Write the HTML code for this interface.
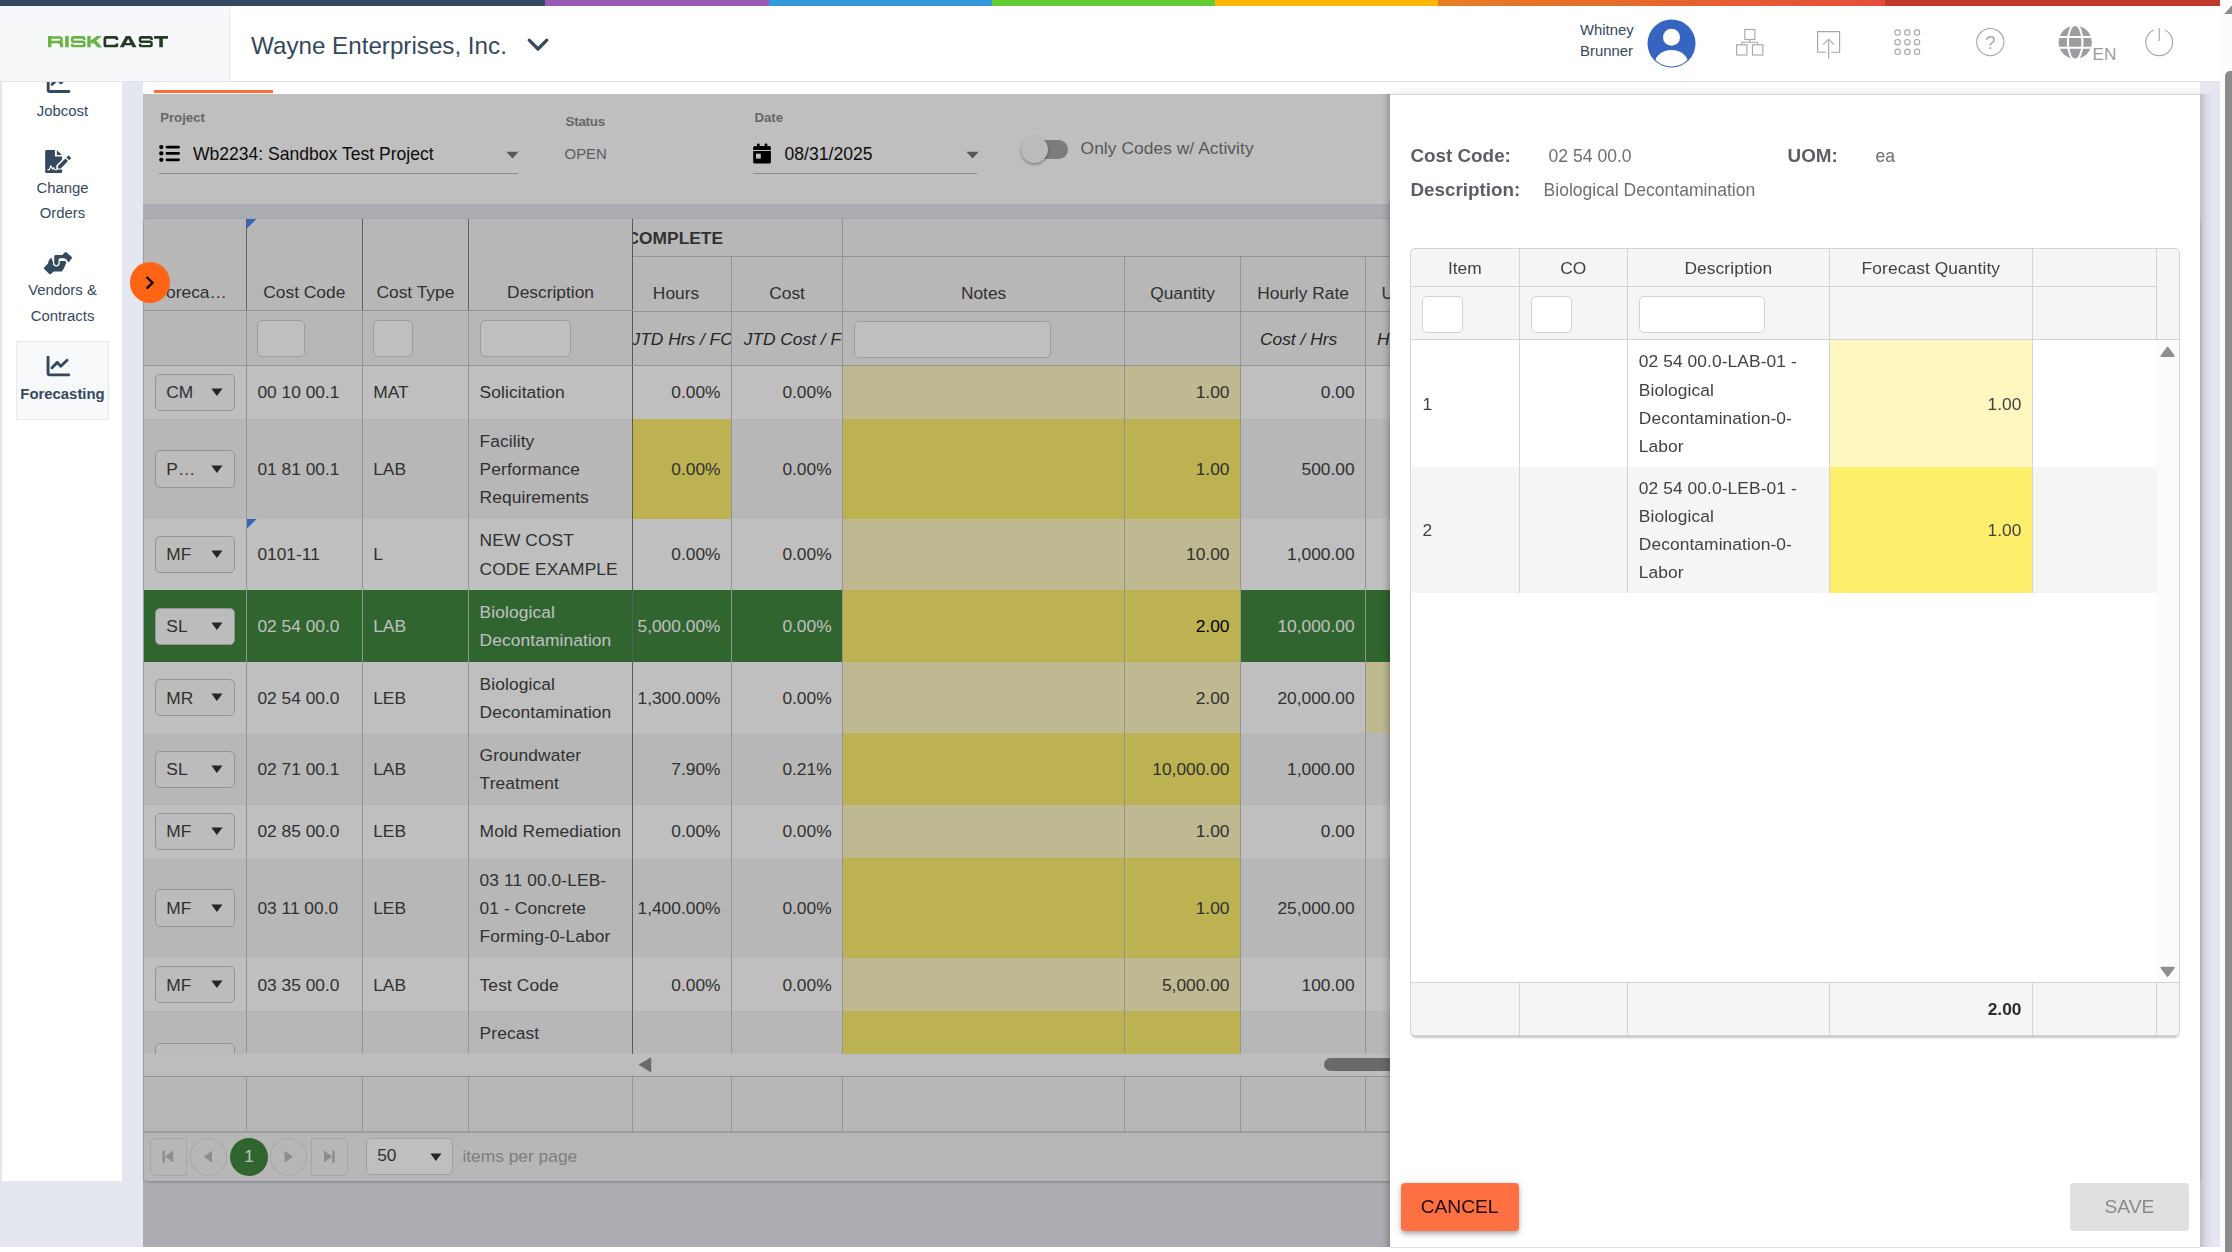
<!DOCTYPE html>
<html lang="en"><head><meta charset="utf-8"><title>Forecasting</title>
<style>
*{box-sizing:border-box;margin:0;padding:0}
html,body{width:2232px;height:1252px;overflow:hidden;background:#fff;font-family:"Liberation Sans",sans-serif;}
body{position:relative}
div{position:absolute}
svg{position:absolute;overflow:visible}
.cell{display:flex;align-items:center;font-size:17.36px;line-height:28.2px;color:#424242;padding:0 11px;overflow:hidden}
.cell.r{justify-content:flex-end;text-align:right}
.cell span{display:block}
.vb{background:#c9c9c9;width:1px}
.hb{background:#c9c9c9;height:1px}
.inp{background:#fff;border:1px solid #d2d2d2;border-radius:5px}
.dd{background:#fbfbfb;border:1px solid #c6c6c6;border-radius:5px}
</style></head>
<body>
<div style="left:0.00px;top:82.00px;width:2220.00px;height:1165.00px;background:#e4e7ef"></div>
<div style="left:0.00px;top:0.00px;width:545.00px;height:5.60px;background:#34495e"></div>
<div style="left:545.00px;top:0.00px;width:224.00px;height:5.60px;background:#9b59b6"></div>
<div style="left:769.00px;top:0.00px;width:223.00px;height:5.60px;background:#3498db"></div>
<div style="left:992.00px;top:0.00px;width:223.00px;height:5.60px;background:#62cb31"></div>
<div style="left:1215.00px;top:0.00px;width:223.00px;height:5.60px;background:#ffb606"></div>
<div style="left:1438.00px;top:0.00px;width:447.00px;height:5.60px;background:linear-gradient(90deg,#e67e22,#e74c3c)"></div>
<div style="left:1885.00px;top:0.00px;width:335.00px;height:5.60px;background:#c0392b"></div>
<div style="left:0.00px;top:5.60px;width:2220.00px;height:76.10px;background:#fff;border-bottom:1px solid #e1e3e6"></div>
<div style="left:0.00px;top:5.60px;width:230.00px;height:75.40px;background:#f7f8fa;border-right:1px solid #e4e6ec"></div>
<svg style="left:47.6px;top:36.2px" width="121" height="11.6" viewBox="0 0 121 11.6"><defs><clipPath id="lg"><rect x="-1" y="0" width="123" height="11.6"/></clipPath></defs><g clip-path="url(#lg)"><g stroke="#69b342" fill="none"><path d="M1.7 0V11.6" stroke-width="3.4"/><path d="M1.7 1.4H11.7Q13.6 1.4 13.6 3.1V4.5Q13.6 6.1 11.7 6.1H1.7" stroke-width="2.5"/><path d="M10.2 6.1Q13.6 6.2 13.6 8.8V11.6" stroke-width="3.3"/><path d="M18.9 0V11.6" stroke-width="3.6"/><path d="M36.25 3.9V2.9Q36.25 1.4 34.75 1.4H25.650000000000002Q24.150000000000002 1.4 24.150000000000002 2.9V4.3Q24.150000000000002 5.8 25.650000000000002 5.8H34.75Q36.25 5.8 36.25 7.3V8.7Q36.25 10.2 34.75 10.2H25.650000000000002Q24.150000000000002 10.2 24.150000000000002 8.7V7.7" fill="none" stroke-width="2.55"/><path d="M41 0V11.6" stroke-width="3.4"/><path d="M52.4 -0.8L43 6.6" stroke-width="3.3"/><path d="M45.9 4.6L52.6 12.2" stroke-width="3.5"/></g><g stroke="#263b23" fill="none"><path d="M68.9 4.1V2.9Q68.9 1.4 67.3 1.4H58.5Q56.85 1.4 56.85 2.9V8.7Q56.85 10.2 58.5 10.2H67.3Q68.9 10.2 68.9 8.7V7.4" stroke-width="2.7"/><path d="M103.55 3.9V2.9Q103.55 1.4 102.05 1.4H93.55Q92.05 1.4 92.05 2.9V4.3Q92.05 5.8 93.55 5.8H102.05Q103.55 5.8 103.55 7.3V8.7Q103.55 10.2 102.05 10.2H93.55Q92.05 10.2 92.05 8.7V7.7" fill="none" stroke-width="2.55"/><path d="M113.1 0V11.6" stroke-width="3.6"/><path d="M106.1 1.35H120.1" stroke-width="2.7"/></g><path d="M71.6 11.6L77.9 0H82.3L88.7 11.6H84.7L83.5 9.3H76.8L75.6 11.6ZM78 6.9H82.3L80.15 2.8Z" fill="#263b23" fill-rule="evenodd"/></g></svg>
<div style="top:31px;font-size:24.2px;line-height:29px;color:#34495e;font-weight:normal;white-space:nowrap;left:251.00px;">Wayne Enterprises, Inc.</div>
<svg style="left:526px;top:36px" width="24" height="18" viewBox="0 0 24 18"><path d="M3.2 4.2 L12 13 L20.8 4.2" fill="none" stroke="#34495e" stroke-width="3.2" stroke-linecap="round" stroke-linejoin="round"/></svg>
<div style="top:21px;font-size:14.88px;line-height:18px;color:#34495e;font-weight:normal;white-space:nowrap;left:1580.00px;">Whitney</div>
<div style="top:42px;font-size:14.88px;line-height:18px;color:#34495e;font-weight:normal;white-space:nowrap;left:1580.00px;">Brunner</div>
<svg style="left:1647px;top:19.2px" width="49" height="49" viewBox="0 0 49 49"><defs><clipPath id="av"><circle cx="24.5" cy="24.5" r="23"/></clipPath></defs><circle cx="24.5" cy="24.5" r="24" fill="#3565c0"/><circle cx="24.5" cy="18.2" r="8.5" fill="#fff"/><ellipse cx="24.5" cy="44.6" rx="16.8" ry="13.6" fill="#fff" clip-path="url(#av)"/></svg>
<svg style="left:1735px;top:28px" width="30" height="29" viewBox="0 0 30 29" fill="none" stroke="#a9a8a9" stroke-width="1.15"><rect x="9.8" y="1.5" width="10" height="10"/><rect x="1.6" y="16.8" width="10.3" height="10.2"/><rect x="17.5" y="16.8" width="10.3" height="10.2"/><path d="M14.8 11.5V14.2M6.8 16.8V14.2H22.6V16.8"/></svg>
<svg style="left:1816px;top:30px" width="26" height="30" viewBox="0 0 26 30" fill="none" stroke="#a9a8a9" stroke-width="1.15"><path d="M10 22.2H1.6V1.6H23.6V22.2H15.2"/><path d="M12.6 28.4V9.2M7.2 14.6L12.6 9.2L18 14.6"/></svg>
<svg style="left:1894.3px;top:28.8px" width="28" height="28" viewBox="0 0 28 28" fill="none" stroke="#a9a8a9" stroke-width="1.1"><circle cx="3.6" cy="3.6" r="2.7"/><circle cx="3.6" cy="13.2" r="2.7"/><circle cx="3.6" cy="22.8" r="2.7"/><circle cx="13.3" cy="3.6" r="2.7"/><circle cx="13.3" cy="13.2" r="2.7"/><circle cx="13.3" cy="22.8" r="2.7"/><circle cx="23.0" cy="3.6" r="2.7"/><circle cx="23.0" cy="13.2" r="2.7"/><circle cx="23.0" cy="22.8" r="2.7"/></svg>
<svg style="left:1975px;top:27px" width="31" height="31" viewBox="0 0 31 31" fill="none" stroke="#a9a8a9" stroke-width="1.15"><circle cx="15.3" cy="15.1" r="13.6"/><text x="15.4" y="21.6" font-family="Liberation Sans" font-size="18.5" text-anchor="middle" fill="#a9a8a9" stroke="none">?</text></svg>
<svg style="left:2058px;top:25px" width="36" height="36" viewBox="0 0 36 36"><circle cx="17.2" cy="17.25" r="16.6" fill="#9c9ca1"/><g fill="none" stroke="#fff" stroke-width="2.1"><ellipse cx="17.2" cy="17.25" rx="7.3" ry="17.4"/><path d="M0 12H35M0 22.7H35"/></g></svg>
<div style="top:43px;font-size:17.2px;line-height:22px;color:#9c9ca1;font-weight:normal;white-space:nowrap;left:2092.50px;">EN</div>
<svg style="left:2144px;top:27px" width="31" height="31" viewBox="0 0 31 31" fill="none" stroke="#a9a8a9" stroke-width="1.15"><path d="M9.75 3.05A13.4 13.4 0 1 0 20.75 3.05M15.25 1V14"/></svg>
<div style="left:2220.00px;top:0.00px;width:12.00px;height:1252.00px;background:#fbfbfb"></div>
<svg style="left:2220px;top:0px" width="12" height="20" viewBox="0 0 12 20"><path d="M4.2 14L12 5.4V14Z" fill="#8b8b8b"/></svg>
<div style="left:2225.00px;top:71.00px;width:9.00px;height:1200.00px;background:#8c8c8c;border-radius:5px 0 0 0"></div>
<div style="left:2.00px;top:81.50px;width:120.00px;height:1099.50px;background:#fff"></div>
<div style="left:2px;top:81.5px;width:120px;height:20px;overflow:hidden"><div style="left:-2px;top:-81.5px;width:130px;height:420px"><svg style="left:0;top:0" width="130" height="420" viewBox="0 0 130 420" fill="none" stroke="#34495e" stroke-width="2.9" stroke-linecap="round" stroke-linejoin="round"><path d="M48.2 73.7V89.9Q48.2 91.5 49.800000000000004 91.5H68.9"/><path d="M52.150000000000006 84.3L57.45 79.0L60.85 82.8L67.25 76.9"/></svg></div></div>
<div style="top:102px;font-size:14.88px;line-height:18px;color:#34495e;font-weight:normal;white-space:nowrap;left:2.50px;width:120px;text-align:center;">Jobcost</div>
<svg style="left:40px;top:145px" width="40" height="32" viewBox="40 145 40 32"><path d="M46.4 150H54.9V156.6H62.1V159.6L56.3 165.4V169.4H62.1V171.7Q62.1 172.9 60.9 172.9H46.4Q45.2 172.9 45.2 171.7V151.2Q45.2 150 46.4 150Z" fill="#34495e"/><path d="M56.9 150.2L61.9 155.1H56.9Z" fill="#34495e"/><path d="M47.8 169.7H49.3L50.9 165.6L52.5 169.2L53.6 167.6L54.7 169.7H57" fill="none" stroke="#fff" stroke-width="1.1" stroke-linejoin="round" stroke-linecap="round"/><path d="M58.1 165.7L65.4 158.5L68 161.1L60.8 168.4H58.1Z" fill="#34495e"/><path d="M66.4 157.4L68.1 155.7Q68.5 155.3 68.9 155.7L70.9 157.7Q71.3 158.1 70.9 158.5L69.2 160.2Z" fill="#34495e"/></svg>
<div style="top:179px;font-size:14.88px;line-height:18px;color:#34495e;font-weight:normal;white-space:nowrap;left:2.50px;width:120px;text-align:center;">Change</div>
<div style="top:204px;font-size:14.88px;line-height:18px;color:#34495e;font-weight:normal;white-space:nowrap;left:2.50px;width:120px;text-align:center;">Orders</div>
<svg style="left:40px;top:248px" width="36" height="30" viewBox="40 248 36 30"><path d="M50.2 258.6Q51.4 257.7 52.2 258.6V261H65.2Q66.4 261.3 66.1 262.7L65.6 264.4L64.9 266.1L64.2 267.4L63.6 268.9L62.6 270.3L61.9 271.6H53.8L50.9 274.1Q50 274.7 49.2 274L44.2 269Q43.6 268.3 44.2 267.6L48 263.5Q48.4 260 50.2 258.6Z" fill="#34495e"/><path d="M55.6 254.9H62.3L65 252.3Q65.7 251.7 66.4 252.3L71.7 257Q72.4 257.7 71.7 258.4L68.6 262.6L67 260.3Q65.8 258.3 63.5 258.3H60.3Q58.5 258.3 58.5 260.1V263A2.15 2.15 0 0 1 54.2 263V256.4Q54.2 254.9 55.6 254.9Z" fill="#fff" stroke="#fff" stroke-width="2.5" stroke-linejoin="round"/><path d="M55.6 254.9H62.3L65 252.3Q65.7 251.7 66.4 252.3L71.7 257Q72.4 257.7 71.7 258.4L68.6 262.6L67 260.3Q65.8 258.3 63.5 258.3H60.3Q58.5 258.3 58.5 260.1V263A2.15 2.15 0 0 1 54.2 263V256.4Q54.2 254.9 55.6 254.9Z" fill="#34495e"/></svg>
<div style="top:281px;font-size:14.88px;line-height:18px;color:#34495e;font-weight:normal;white-space:nowrap;left:2.50px;width:120px;text-align:center;">Vendors &amp;</div>
<div style="top:307px;font-size:14.88px;line-height:18px;color:#34495e;font-weight:normal;white-space:nowrap;left:2.50px;width:120px;text-align:center;">Contracts</div>
<div style="left:16.20px;top:341.00px;width:92.50px;height:78.60px;background:#f8f9fb;border:1px solid #e7e9ee"></div>
<svg style="left:0;top:0" width="130" height="420" viewBox="0 0 130 420" fill="none" stroke="#34495e" stroke-width="2.9" stroke-linecap="round" stroke-linejoin="round"><path d="M48.05 357.09999999999997V373.29999999999995Q48.05 374.9 49.65 374.9H68.75"/><path d="M52.0 367.7L57.3 362.4L60.699999999999996 366.2L67.1 360.29999999999995"/></svg>
<div style="top:385px;font-size:14.88px;line-height:18px;color:#34495e;font-weight:bold;white-space:nowrap;left:2.50px;width:120px;text-align:center;">Forecasting</div>
<div style="left:143.00px;top:81.50px;width:2057.00px;height:122.50px;background:#fff"></div>
<div style="left:154.00px;top:90.00px;width:119.00px;height:3.20px;background:#ff6c37"></div>
<div style="top:109px;font-size:13.2px;line-height:17px;color:#8a8a8a;font-weight:bold;white-space:nowrap;left:160.20px;">Project</div>
<svg style="left:157px;top:143px" width="26" height="22" viewBox="157 143 26 22" fill="#000"><circle cx="161.3" cy="147.1" r="2.15"/><rect x="165.6" y="145.7" width="14.4" height="2.8" rx="1.4"/><circle cx="161.3" cy="153.45" r="2.15"/><rect x="165.6" y="152.04999999999998" width="14.4" height="2.8" rx="1.4"/><circle cx="161.3" cy="159.8" r="2.15"/><rect x="165.6" y="158.4" width="14.4" height="2.8" rx="1.4"/></svg>
<div style="top:143px;font-size:17.56px;line-height:22px;color:#111;font-weight:normal;white-space:nowrap;left:193.00px;">Wb2234: Sandbox Test Project</div>
<svg style="left:506px;top:151px" width="14" height="9" viewBox="0 0 14 9"><path d="M0.4 0.8H12.6L6.5 7.4Z" fill="#747474"/></svg>
<div style="left:159.00px;top:172.80px;width:359.00px;height:1.00px;background:#bdbdbd"></div>
<div style="top:113px;font-size:13.5px;line-height:17px;color:#8a8a8a;font-weight:bold;white-space:nowrap;left:565.60px;letter-spacing:-0.33px;">Status</div>
<div style="top:145px;font-size:14.88px;line-height:18px;color:#7c7c7c;font-weight:normal;white-space:nowrap;left:564.60px;">OPEN</div>
<div style="top:109px;font-size:13.2px;line-height:17px;color:#8a8a8a;font-weight:bold;white-space:nowrap;left:754.40px;">Date</div>
<svg style="left:751px;top:142px" width="22" height="24" viewBox="751 142 22 24" fill="#000"><rect x="757" y="143.4" width="2.7" height="4" rx="1.2"/><rect x="764.6" y="143.4" width="2.7" height="4" rx="1.2"/><path d="M754.8 146H769.3Q770.9 146 770.9 147.6V149.9H753.2V147.6Q753.2 146 754.8 146Z"/><path d="M753.2 151.1H770.9V162Q770.9 163.6 769.3 163.6H754.8Q753.2 163.6 753.2 162Z"/><rect x="756" y="153.7" width="4.8" height="4.9" fill="#fff"/></svg>
<div style="top:143px;font-size:17.56px;line-height:22px;color:#111;font-weight:normal;white-space:nowrap;left:784.60px;">08/31/2025</div>
<svg style="left:965.5px;top:151.3px" width="14" height="9" viewBox="0 0 14 9"><path d="M0.4 0.8H12.6L6.5 7.4Z" fill="#747474"/></svg>
<div style="left:752.80px;top:172.80px;width:224.00px;height:1.00px;background:#bdbdbd"></div>
<div style="left:1025.00px;top:140.20px;width:43.00px;height:18.60px;background:#a6a6a6;border-radius:9.3px"></div>
<div style="left:1020.60px;top:135.80px;width:27.20px;height:27.20px;background:#fafafa;border-radius:50%;box-shadow:0 1.5px 3px rgba(0,0,0,.35)"></div>
<div style="top:137px;font-size:17.36px;line-height:22px;color:#767676;font-weight:normal;white-space:nowrap;left:1080.60px;letter-spacing:0.06px;">Only Codes w/ Activity</div>
<div style="left:143.50px;top:218.50px;width:2056.50px;height:962.50px;background:#fff;border-radius:4px;box-shadow:0 1px 3px rgba(0,0,0,.25)"></div>
<div style="left:143.50px;top:218.50px;width:2056.50px;height:146.90px;background:#f5f5f5;border-radius:4px 4px 0 0"></div>
<div style="left:0.00px;top:218.50px;width:2232.00px;height:835.00px;overflow:hidden;"><div style="left:0;top:-218.50px;width:2232px;height:900px"><div style="left:143.50px;top:365.50px;width:2056.50px;height:53.50px;background:#fff"></div><div style="top:381px;font-size:17.36px;line-height:22px;color:#424242;font-weight:normal;white-space:nowrap;right:1511.50px;text-align:right;">0.00%</div><div style="top:381px;font-size:17.36px;line-height:22px;color:#424242;font-weight:normal;white-space:nowrap;right:1400.40px;text-align:right;">0.00%</div><div style="left:842.60px;top:365.50px;width:282.00px;height:53.50px;background:#fef7c0"></div><div style="left:1124.60px;top:365.50px;width:115.90px;height:53.50px;background:#fef7c0"></div><div style="top:381px;font-size:17.36px;line-height:22px;color:#424242;font-weight:normal;white-space:nowrap;right:1002.50px;text-align:right;">1.00</div><div style="top:381px;font-size:17.36px;line-height:22px;color:#424242;font-weight:normal;white-space:nowrap;right:877.40px;text-align:right;">0.00</div><div style="left:143.50px;top:365.50px;width:489.00px;height:53.50px;background:#fff"></div><div class="dd" style="left:154.80px;top:373.85px;width:80.20px;height:37.20px;"></div><div style="top:381px;font-size:17.36px;line-height:22px;color:#424242;font-weight:normal;white-space:nowrap;left:166.30px;">CM</div><svg style="left:211px;top:388.25px" width="12" height="9" viewBox="0 0 12 9"><path d="M0.3 0.4H11.5L5.9 8Z" fill="#333"/></svg><div style="top:381px;font-size:17.36px;line-height:22px;color:#424242;font-weight:normal;white-space:nowrap;left:257.40px;">00 10 00.1</div><div style="top:381px;font-size:17.36px;line-height:22px;color:#424242;font-weight:normal;white-space:nowrap;left:373.20px;">MAT</div><div style="top:381px;font-size:17.36px;line-height:22px;color:#424242;font-weight:normal;white-space:nowrap;left:479.60px;letter-spacing:0.1px;">Solicitation</div><div style="left:143.50px;top:419.00px;width:2056.50px;height:99.60px;background:#f5f5f5"></div><div style="left:620.50px;top:419.00px;width:111.00px;height:99.60px;background:#fdee6c"></div><div style="top:458px;font-size:17.36px;line-height:22px;color:#424242;font-weight:normal;white-space:nowrap;right:1511.50px;text-align:right;">0.00%</div><div style="top:458px;font-size:17.36px;line-height:22px;color:#424242;font-weight:normal;white-space:nowrap;right:1400.40px;text-align:right;">0.00%</div><div style="left:842.60px;top:419.00px;width:282.00px;height:99.60px;background:#fdee6c"></div><div style="left:1124.60px;top:419.00px;width:115.90px;height:99.60px;background:#fdee6c"></div><div style="top:458px;font-size:17.36px;line-height:22px;color:#424242;font-weight:normal;white-space:nowrap;right:1002.50px;text-align:right;">1.00</div><div style="top:458px;font-size:17.36px;line-height:22px;color:#424242;font-weight:normal;white-space:nowrap;right:877.40px;text-align:right;">500.00</div><div style="left:143.50px;top:419.00px;width:489.00px;height:99.60px;background:#f5f5f5"></div><div class="dd" style="left:154.80px;top:450.40px;width:80.20px;height:37.20px;"></div><div style="top:458px;font-size:17.36px;line-height:22px;color:#424242;font-weight:normal;white-space:nowrap;left:166.30px;">P…</div><svg style="left:211px;top:464.80px" width="12" height="9" viewBox="0 0 12 9"><path d="M0.3 0.4H11.5L5.9 8Z" fill="#333"/></svg><div style="top:458px;font-size:17.36px;line-height:22px;color:#424242;font-weight:normal;white-space:nowrap;left:257.40px;">01 81 00.1</div><div style="top:458px;font-size:17.36px;line-height:22px;color:#424242;font-weight:normal;white-space:nowrap;left:373.20px;">LAB</div><div style="top:430px;font-size:17.36px;line-height:22px;color:#424242;font-weight:normal;white-space:nowrap;left:479.60px;letter-spacing:0.1px;">Facility</div><div style="top:458px;font-size:17.36px;line-height:22px;color:#424242;font-weight:normal;white-space:nowrap;left:479.60px;letter-spacing:0.1px;">Performance</div><div style="top:486px;font-size:17.36px;line-height:22px;color:#424242;font-weight:normal;white-space:nowrap;left:479.60px;letter-spacing:0.1px;">Requirements</div><div style="left:143.50px;top:518.60px;width:2056.50px;height:71.30px;background:#fff"></div><div style="top:543px;font-size:17.36px;line-height:22px;color:#424242;font-weight:normal;white-space:nowrap;right:1511.50px;text-align:right;">0.00%</div><div style="top:543px;font-size:17.36px;line-height:22px;color:#424242;font-weight:normal;white-space:nowrap;right:1400.40px;text-align:right;">0.00%</div><div style="left:842.60px;top:518.60px;width:282.00px;height:71.30px;background:#fef7c0"></div><div style="left:1124.60px;top:518.60px;width:115.90px;height:71.30px;background:#fef7c0"></div><div style="top:543px;font-size:17.36px;line-height:22px;color:#424242;font-weight:normal;white-space:nowrap;right:1002.50px;text-align:right;">10.00</div><div style="top:543px;font-size:17.36px;line-height:22px;color:#424242;font-weight:normal;white-space:nowrap;right:877.40px;text-align:right;">1,000.00</div><div style="left:143.50px;top:518.60px;width:489.00px;height:71.30px;background:#fff"></div><div class="dd" style="left:154.80px;top:535.85px;width:80.20px;height:37.20px;"></div><div style="top:543px;font-size:17.36px;line-height:22px;color:#424242;font-weight:normal;white-space:nowrap;left:166.30px;">MF</div><svg style="left:211px;top:550.25px" width="12" height="9" viewBox="0 0 12 9"><path d="M0.3 0.4H11.5L5.9 8Z" fill="#333"/></svg><div style="top:543px;font-size:17.36px;line-height:22px;color:#424242;font-weight:normal;white-space:nowrap;left:257.40px;">0101-11</div><div style="top:543px;font-size:17.36px;line-height:22px;color:#424242;font-weight:normal;white-space:nowrap;left:373.20px;">L</div><div style="top:529px;font-size:17.36px;line-height:22px;color:#424242;font-weight:normal;white-space:nowrap;left:479.60px;letter-spacing:0.1px;">NEW COST</div><div style="top:558px;font-size:17.36px;line-height:22px;color:#424242;font-weight:normal;white-space:nowrap;left:479.60px;letter-spacing:0.1px;">CODE EXAMPLE</div><div style="left:143.50px;top:589.90px;width:2056.50px;height:72.00px;background:#40873f"></div><div style="top:615px;font-size:17.36px;line-height:22px;color:#fff;font-weight:normal;white-space:nowrap;right:1511.50px;text-align:right;">5,000.00%</div><div style="top:615px;font-size:17.36px;line-height:22px;color:#fff;font-weight:normal;white-space:nowrap;right:1400.40px;text-align:right;">0.00%</div><div style="left:842.60px;top:589.90px;width:282.00px;height:72.00px;background:#fdee6c"></div><div style="left:1124.60px;top:589.90px;width:115.90px;height:72.00px;background:#fdee6c"></div><div style="top:615px;font-size:17.36px;line-height:22px;color:#000;font-weight:normal;white-space:nowrap;right:1002.50px;text-align:right;">2.00</div><div style="top:615px;font-size:17.36px;line-height:22px;color:#fff;font-weight:normal;white-space:nowrap;right:877.40px;text-align:right;">10,000.00</div><div style="left:143.50px;top:589.90px;width:489.00px;height:72.00px;background:#40873f"></div><div class="dd" style="left:154.80px;top:607.50px;width:80.20px;height:37.20px;"></div><div style="top:615px;font-size:17.36px;line-height:22px;color:#424242;font-weight:normal;white-space:nowrap;left:166.30px;">SL</div><svg style="left:211px;top:621.90px" width="12" height="9" viewBox="0 0 12 9"><path d="M0.3 0.4H11.5L5.9 8Z" fill="#333"/></svg><div style="top:615px;font-size:17.36px;line-height:22px;color:#fff;font-weight:normal;white-space:nowrap;left:257.40px;">02 54 00.0</div><div style="top:615px;font-size:17.36px;line-height:22px;color:#fff;font-weight:normal;white-space:nowrap;left:373.20px;">LAB</div><div style="top:601px;font-size:17.36px;line-height:22px;color:#fff;font-weight:normal;white-space:nowrap;left:479.60px;letter-spacing:0.1px;">Biological</div><div style="top:629px;font-size:17.36px;line-height:22px;color:#fff;font-weight:normal;white-space:nowrap;left:479.60px;letter-spacing:0.1px;">Decontamination</div><div style="left:143.50px;top:661.90px;width:2056.50px;height:71.10px;background:#fff"></div><div style="top:687px;font-size:17.36px;line-height:22px;color:#424242;font-weight:normal;white-space:nowrap;right:1511.50px;text-align:right;">1,300.00%</div><div style="top:687px;font-size:17.36px;line-height:22px;color:#424242;font-weight:normal;white-space:nowrap;right:1400.40px;text-align:right;">0.00%</div><div style="left:842.60px;top:661.90px;width:282.00px;height:71.10px;background:#fef7c0"></div><div style="left:1124.60px;top:661.90px;width:115.90px;height:71.10px;background:#fef7c0"></div><div style="top:687px;font-size:17.36px;line-height:22px;color:#424242;font-weight:normal;white-space:nowrap;right:1002.50px;text-align:right;">2.00</div><div style="top:687px;font-size:17.36px;line-height:22px;color:#424242;font-weight:normal;white-space:nowrap;right:877.40px;text-align:right;">20,000.00</div><div style="left:1365.60px;top:661.90px;width:116.40px;height:71.10px;background:#fef7c0"></div><div style="left:143.50px;top:661.90px;width:489.00px;height:71.10px;background:#fff"></div><div class="dd" style="left:154.80px;top:679.05px;width:80.20px;height:37.20px;"></div><div style="top:687px;font-size:17.36px;line-height:22px;color:#424242;font-weight:normal;white-space:nowrap;left:166.30px;">MR</div><svg style="left:211px;top:693.45px" width="12" height="9" viewBox="0 0 12 9"><path d="M0.3 0.4H11.5L5.9 8Z" fill="#333"/></svg><div style="top:687px;font-size:17.36px;line-height:22px;color:#424242;font-weight:normal;white-space:nowrap;left:257.40px;">02 54 00.0</div><div style="top:687px;font-size:17.36px;line-height:22px;color:#424242;font-weight:normal;white-space:nowrap;left:373.20px;">LEB</div><div style="top:673px;font-size:17.36px;line-height:22px;color:#424242;font-weight:normal;white-space:nowrap;left:479.60px;letter-spacing:0.1px;">Biological</div><div style="top:701px;font-size:17.36px;line-height:22px;color:#424242;font-weight:normal;white-space:nowrap;left:479.60px;letter-spacing:0.1px;">Decontamination</div><div style="left:143.50px;top:733.00px;width:2056.50px;height:71.85px;background:#f5f5f5"></div><div style="top:758px;font-size:17.36px;line-height:22px;color:#424242;font-weight:normal;white-space:nowrap;right:1511.50px;text-align:right;">7.90%</div><div style="top:758px;font-size:17.36px;line-height:22px;color:#424242;font-weight:normal;white-space:nowrap;right:1400.40px;text-align:right;">0.21%</div><div style="left:842.60px;top:733.00px;width:282.00px;height:71.85px;background:#fdee6c"></div><div style="left:1124.60px;top:733.00px;width:115.90px;height:71.85px;background:#fdee6c"></div><div style="top:758px;font-size:17.36px;line-height:22px;color:#424242;font-weight:normal;white-space:nowrap;right:1002.50px;text-align:right;">10,000.00</div><div style="top:758px;font-size:17.36px;line-height:22px;color:#424242;font-weight:normal;white-space:nowrap;right:877.40px;text-align:right;">1,000.00</div><div style="left:143.50px;top:733.00px;width:489.00px;height:71.85px;background:#f5f5f5"></div><div class="dd" style="left:154.80px;top:750.52px;width:80.20px;height:37.20px;"></div><div style="top:758px;font-size:17.36px;line-height:22px;color:#424242;font-weight:normal;white-space:nowrap;left:166.30px;">SL</div><svg style="left:211px;top:764.92px" width="12" height="9" viewBox="0 0 12 9"><path d="M0.3 0.4H11.5L5.9 8Z" fill="#333"/></svg><div style="top:758px;font-size:17.36px;line-height:22px;color:#424242;font-weight:normal;white-space:nowrap;left:257.40px;">02 71 00.1</div><div style="top:758px;font-size:17.36px;line-height:22px;color:#424242;font-weight:normal;white-space:nowrap;left:373.20px;">LAB</div><div style="top:744px;font-size:17.36px;line-height:22px;color:#424242;font-weight:normal;white-space:nowrap;left:479.60px;letter-spacing:0.1px;">Groundwater</div><div style="top:772px;font-size:17.36px;line-height:22px;color:#424242;font-weight:normal;white-space:nowrap;left:479.60px;letter-spacing:0.1px;">Treatment</div><div style="left:143.50px;top:804.85px;width:2056.50px;height:52.85px;background:#fff"></div><div style="top:820px;font-size:17.36px;line-height:22px;color:#424242;font-weight:normal;white-space:nowrap;right:1511.50px;text-align:right;">0.00%</div><div style="top:820px;font-size:17.36px;line-height:22px;color:#424242;font-weight:normal;white-space:nowrap;right:1400.40px;text-align:right;">0.00%</div><div style="left:842.60px;top:804.85px;width:282.00px;height:52.85px;background:#fef7c0"></div><div style="left:1124.60px;top:804.85px;width:115.90px;height:52.85px;background:#fef7c0"></div><div style="top:820px;font-size:17.36px;line-height:22px;color:#424242;font-weight:normal;white-space:nowrap;right:1002.50px;text-align:right;">1.00</div><div style="top:820px;font-size:17.36px;line-height:22px;color:#424242;font-weight:normal;white-space:nowrap;right:877.40px;text-align:right;">0.00</div><div style="left:143.50px;top:804.85px;width:489.00px;height:52.85px;background:#fff"></div><div class="dd" style="left:154.80px;top:812.88px;width:80.20px;height:37.20px;"></div><div style="top:820px;font-size:17.36px;line-height:22px;color:#424242;font-weight:normal;white-space:nowrap;left:166.30px;">MF</div><svg style="left:211px;top:827.28px" width="12" height="9" viewBox="0 0 12 9"><path d="M0.3 0.4H11.5L5.9 8Z" fill="#333"/></svg><div style="top:820px;font-size:17.36px;line-height:22px;color:#424242;font-weight:normal;white-space:nowrap;left:257.40px;">02 85 00.0</div><div style="top:820px;font-size:17.36px;line-height:22px;color:#424242;font-weight:normal;white-space:nowrap;left:373.20px;">LEB</div><div style="top:820px;font-size:17.36px;line-height:22px;color:#424242;font-weight:normal;white-space:nowrap;left:479.60px;letter-spacing:0.1px;">Mold Remediation</div><div style="left:143.50px;top:857.70px;width:2056.50px;height:100.10px;background:#f5f5f5"></div><div style="top:897px;font-size:17.36px;line-height:22px;color:#424242;font-weight:normal;white-space:nowrap;right:1511.50px;text-align:right;">1,400.00%</div><div style="top:897px;font-size:17.36px;line-height:22px;color:#424242;font-weight:normal;white-space:nowrap;right:1400.40px;text-align:right;">0.00%</div><div style="left:842.60px;top:857.70px;width:282.00px;height:100.10px;background:#fdee6c"></div><div style="left:1124.60px;top:857.70px;width:115.90px;height:100.10px;background:#fdee6c"></div><div style="top:897px;font-size:17.36px;line-height:22px;color:#424242;font-weight:normal;white-space:nowrap;right:1002.50px;text-align:right;">1.00</div><div style="top:897px;font-size:17.36px;line-height:22px;color:#424242;font-weight:normal;white-space:nowrap;right:877.40px;text-align:right;">25,000.00</div><div style="left:143.50px;top:857.70px;width:489.00px;height:100.10px;background:#f5f5f5"></div><div class="dd" style="left:154.80px;top:889.35px;width:80.20px;height:37.20px;"></div><div style="top:897px;font-size:17.36px;line-height:22px;color:#424242;font-weight:normal;white-space:nowrap;left:166.30px;">MF</div><svg style="left:211px;top:903.75px" width="12" height="9" viewBox="0 0 12 9"><path d="M0.3 0.4H11.5L5.9 8Z" fill="#333"/></svg><div style="top:897px;font-size:17.36px;line-height:22px;color:#424242;font-weight:normal;white-space:nowrap;left:257.40px;">03 11 00.0</div><div style="top:897px;font-size:17.36px;line-height:22px;color:#424242;font-weight:normal;white-space:nowrap;left:373.20px;">LEB</div><div style="top:869px;font-size:17.36px;line-height:22px;color:#424242;font-weight:normal;white-space:nowrap;left:479.60px;letter-spacing:0.1px;">03 11 00.0-LEB-</div><div style="top:897px;font-size:17.36px;line-height:22px;color:#424242;font-weight:normal;white-space:nowrap;left:479.60px;letter-spacing:0.1px;">01 - Concrete</div><div style="top:925px;font-size:17.36px;line-height:22px;color:#424242;font-weight:normal;white-space:nowrap;left:479.60px;letter-spacing:0.1px;">Forming-0-Labor</div><div style="left:143.50px;top:957.80px;width:2056.50px;height:53.30px;background:#fff"></div><div style="top:974px;font-size:17.36px;line-height:22px;color:#424242;font-weight:normal;white-space:nowrap;right:1511.50px;text-align:right;">0.00%</div><div style="top:974px;font-size:17.36px;line-height:22px;color:#424242;font-weight:normal;white-space:nowrap;right:1400.40px;text-align:right;">0.00%</div><div style="left:842.60px;top:957.80px;width:282.00px;height:53.30px;background:#fef7c0"></div><div style="left:1124.60px;top:957.80px;width:115.90px;height:53.30px;background:#fef7c0"></div><div style="top:974px;font-size:17.36px;line-height:22px;color:#424242;font-weight:normal;white-space:nowrap;right:1002.50px;text-align:right;">5,000.00</div><div style="top:974px;font-size:17.36px;line-height:22px;color:#424242;font-weight:normal;white-space:nowrap;right:877.40px;text-align:right;">100.00</div><div style="left:143.50px;top:957.80px;width:489.00px;height:53.30px;background:#fff"></div><div class="dd" style="left:154.80px;top:966.05px;width:80.20px;height:37.20px;"></div><div style="top:974px;font-size:17.36px;line-height:22px;color:#424242;font-weight:normal;white-space:nowrap;left:166.30px;">MF</div><svg style="left:211px;top:980.45px" width="12" height="9" viewBox="0 0 12 9"><path d="M0.3 0.4H11.5L5.9 8Z" fill="#333"/></svg><div style="top:974px;font-size:17.36px;line-height:22px;color:#424242;font-weight:normal;white-space:nowrap;left:257.40px;">03 35 00.0</div><div style="top:974px;font-size:17.36px;line-height:22px;color:#424242;font-weight:normal;white-space:nowrap;left:373.20px;">LAB</div><div style="top:974px;font-size:17.36px;line-height:22px;color:#424242;font-weight:normal;white-space:nowrap;left:479.60px;letter-spacing:0.1px;">Test Code</div><div style="left:143.50px;top:1011.10px;width:2056.50px;height:99.80px;background:#f5f5f5"></div><div style="top:1050px;font-size:17.36px;line-height:22px;color:#424242;font-weight:normal;white-space:nowrap;right:1511.50px;text-align:right;">0.00%</div><div style="top:1050px;font-size:17.36px;line-height:22px;color:#424242;font-weight:normal;white-space:nowrap;right:1400.40px;text-align:right;">0.00%</div><div style="left:842.60px;top:1011.10px;width:282.00px;height:99.80px;background:#fdee6c"></div><div style="left:1124.60px;top:1011.10px;width:115.90px;height:99.80px;background:#fdee6c"></div><div style="top:1050px;font-size:17.36px;line-height:22px;color:#424242;font-weight:normal;white-space:nowrap;right:1002.50px;text-align:right;">1.00</div><div style="top:1050px;font-size:17.36px;line-height:22px;color:#424242;font-weight:normal;white-space:nowrap;right:877.40px;text-align:right;">0.00</div><div style="left:143.50px;top:1011.10px;width:489.00px;height:99.80px;background:#f5f5f5"></div><div class="dd" style="left:154.80px;top:1042.60px;width:80.20px;height:37.20px;"></div><div style="top:1050px;font-size:17.36px;line-height:22px;color:#424242;font-weight:normal;white-space:nowrap;left:166.30px;">MF</div><svg style="left:211px;top:1057.00px" width="12" height="9" viewBox="0 0 12 9"><path d="M0.3 0.4H11.5L5.9 8Z" fill="#333"/></svg><div style="top:1050px;font-size:17.36px;line-height:22px;color:#424242;font-weight:normal;white-space:nowrap;left:257.40px;">03 41 00.0</div><div style="top:1050px;font-size:17.36px;line-height:22px;color:#424242;font-weight:normal;white-space:nowrap;left:373.20px;">LAB</div><div style="top:1022px;font-size:17.36px;line-height:22px;color:#424242;font-weight:normal;white-space:nowrap;left:479.60px;letter-spacing:0.1px;">Precast</div><div style="top:1050px;font-size:17.36px;line-height:22px;color:#424242;font-weight:normal;white-space:nowrap;left:479.60px;letter-spacing:0.1px;">Structural</div><div style="top:1078px;font-size:17.36px;line-height:22px;color:#424242;font-weight:normal;white-space:nowrap;left:479.60px;letter-spacing:0.1px;">Concrete</div><svg style="left:246.9px;top:518.7px" width="10" height="10" viewBox="0 0 10 10"><path d="M0 0H9.4L0 9.4Z" fill="#4a86f7"/></svg></div></div>
<svg style="left:246.9px;top:218.5px" width="10" height="10" viewBox="0 0 10 10"><path d="M0 0H9.4L0 9.4Z" fill="#4a86f7"/></svg>
<div style="left:143.50px;top:218.00px;width:102.90px;height:92.00px;overflow:hidden"><div style="left:12px;top:63px;width:79px;font-size:17.36px;line-height:22px;color:#424242;white-space:nowrap;overflow:hidden;text-overflow:ellipsis">Forecast Method</div></div>
<div style="top:281px;font-size:17.36px;line-height:22px;color:#424242;font-weight:normal;white-space:nowrap;left:246.40px;width:115.79999999999998px;text-align:center;">Cost Code</div>
<div style="top:281px;font-size:17.36px;line-height:22px;color:#424242;font-weight:normal;white-space:nowrap;left:362.20px;width:106.40000000000003px;text-align:center;">Cost Type</div>
<div style="top:281px;font-size:17.36px;line-height:22px;color:#424242;font-weight:normal;white-space:nowrap;left:468.60px;width:163.89999999999998px;text-align:center;">Description</div>
<div style="left:633.00px;top:218.00px;width:1600.00px;height:148.00px;overflow:hidden"><div style="left:-633px;top:-218px;width:2232px;height:400px"><div style="top:227px;font-size:17.36px;line-height:22px;color:#424242;font-weight:bold;white-space:nowrap;right:1509.00px;text-align:right;">% COMPLETE</div><div style="top:282px;font-size:17.36px;line-height:22px;color:#424242;font-weight:normal;white-space:nowrap;left:620.50px;width:111.0px;text-align:center;">Hours</div><div style="top:282px;font-size:17.36px;line-height:22px;color:#424242;font-weight:normal;white-space:nowrap;left:731.50px;width:111.10000000000002px;text-align:center;">Cost</div><div style="top:282px;font-size:17.36px;line-height:22px;color:#424242;font-weight:normal;white-space:nowrap;left:842.60px;width:281.9999999999999px;text-align:center;">Notes</div><div style="top:282px;font-size:17.36px;line-height:22px;color:#424242;font-weight:normal;white-space:nowrap;left:1124.60px;width:115.90000000000009px;text-align:center;">Quantity</div><div style="top:282px;font-size:17.36px;line-height:22px;color:#424242;font-weight:normal;white-space:nowrap;left:1240.50px;width:125.09999999999991px;text-align:center;">Hourly Rate</div><div style="top:282px;font-size:17.36px;line-height:22px;color:#424242;font-weight:normal;white-space:nowrap;left:1381.40px;">Unit Cost</div><div style="left:620.50px;top:312.00px;width:110.00px;height:52.00px;overflow:hidden"><div style="top:16px;font-size:17.36px;line-height:22px;color:#333;font-weight:normal;white-space:nowrap;font-style:italic;left:11.00px;">JTD Hrs / FC Hrs</div></div><div style="left:731.50px;top:312.00px;width:110.10px;height:52.00px;overflow:hidden"><div style="top:16px;font-size:17.36px;line-height:22px;color:#333;font-weight:normal;white-space:nowrap;font-style:italic;left:12.20px;">JTD Cost / FC Cost</div></div><div style="top:328px;font-size:17.36px;line-height:22px;color:#333;font-weight:normal;white-space:nowrap;font-style:italic;left:1260.00px;">Cost / Hrs</div><div style="top:328px;font-size:17.36px;line-height:22px;color:#333;font-weight:normal;white-space:nowrap;font-style:italic;left:1377.00px;">Hrs / Qty</div><div class="inp" style="left:853.80px;top:320.70px;width:197.20px;height:37.50px;"></div></div></div>
<div class="inp" style="left:256.80px;top:319.80px;width:48.20px;height:37.30px;"></div>
<div class="inp" style="left:372.60px;top:319.80px;width:40.40px;height:37.30px;"></div>
<div class="inp" style="left:479.60px;top:319.80px;width:91.30px;height:37.30px;"></div>
<div style="left:143.50px;top:1053.50px;width:2056.50px;height:22.80px;background:#fdfdfd"></div>
<svg style="left:638px;top:1057px" width="14" height="16" viewBox="0 0 14 16"><path d="M12.6 1.2V14.4L1.6 7.8Z" fill="#8e8e8e" stroke="#8e8e8e" stroke-width="1.2" stroke-linejoin="round"/></svg>
<div style="left:1324.00px;top:1057.80px;width:300.00px;height:13.40px;background:#8d8d8d;border-radius:7px"></div>
<div style="left:143.50px;top:1076.30px;width:2056.50px;height:55.40px;background:#f5f5f5"></div>
<div style="left:143.50px;top:1131.70px;width:2056.50px;height:49.30px;background:#f5f5f5;border-radius:0 0 4px 4px"></div>
<div style="left:245.90px;top:310.60px;width:1.00px;height:742.90px;background:#c4c4c4"></div>
<div style="left:245.90px;top:1076.30px;width:1.00px;height:55.40px;background:#c4c4c4"></div>
<div style="left:245.90px;top:218.50px;width:1.00px;height:92.10px;background:#828282"></div>
<div style="left:361.70px;top:310.60px;width:1.00px;height:742.90px;background:#c4c4c4"></div>
<div style="left:361.70px;top:1076.30px;width:1.00px;height:55.40px;background:#c4c4c4"></div>
<div style="left:361.70px;top:218.50px;width:1.00px;height:92.10px;background:#828282"></div>
<div style="left:468.10px;top:310.60px;width:1.00px;height:742.90px;background:#c4c4c4"></div>
<div style="left:468.10px;top:1076.30px;width:1.00px;height:55.40px;background:#c4c4c4"></div>
<div style="left:468.10px;top:218.50px;width:1.00px;height:92.10px;background:#828282"></div>
<div style="left:731.00px;top:256.40px;width:1.00px;height:797.10px;background:#c4c4c4"></div>
<div style="left:842.10px;top:218.50px;width:1.00px;height:835.00px;background:#c4c4c4"></div>
<div style="left:1124.10px;top:256.40px;width:1.00px;height:797.10px;background:#c4c4c4"></div>
<div style="left:1240.00px;top:256.40px;width:1.00px;height:797.10px;background:#c4c4c4"></div>
<div style="left:1365.10px;top:256.40px;width:1.00px;height:797.10px;background:#c4c4c4"></div>
<div style="left:731.00px;top:1076.30px;width:1.00px;height:55.40px;background:#c4c4c4"></div>
<div style="left:842.10px;top:1076.30px;width:1.00px;height:55.40px;background:#c4c4c4"></div>
<div style="left:1124.10px;top:1076.30px;width:1.00px;height:55.40px;background:#c4c4c4"></div>
<div style="left:1240.00px;top:1076.30px;width:1.00px;height:55.40px;background:#c4c4c4"></div>
<div style="left:1365.10px;top:1076.30px;width:1.00px;height:55.40px;background:#c4c4c4"></div>
<div style="left:632.00px;top:1076.30px;width:1.00px;height:55.40px;background:#c4c4c4"></div>
<div style="left:632.00px;top:218.50px;width:1.00px;height:835.00px;background:#787878"></div>
<div style="left:632.50px;top:255.90px;width:1567.50px;height:1.00px;background:#c4c4c4"></div>
<div style="left:143.50px;top:310.10px;width:489.00px;height:1.00px;background:#c4c4c4"></div>
<div style="left:632.50px;top:310.90px;width:1567.50px;height:1.00px;background:#c4c4c4"></div>
<div style="left:143.50px;top:364.90px;width:2056.50px;height:1.00px;background:#c4c4c4"></div>
<div style="left:143.50px;top:1075.80px;width:2056.50px;height:1.00px;background:#c4c4c4"></div>
<div style="left:143.50px;top:1131.40px;width:2056.50px;height:2.00px;background:#d2d2d2"></div>
<div style="left:150.30px;top:1138.40px;width:36.40px;height:37.20px;border:1px solid #dedede;border-radius:5px 0 0 5px"></div>
<div style="left:190.00px;top:1138.40px;width:36.80px;height:37.20px;border:1px solid #dedede;border-radius:50%"></div>
<div style="left:230.00px;top:1137.80px;width:38.00px;height:38.00px;background:#40873f;border-radius:50%"></div>
<div style="left:270.00px;top:1138.40px;width:37.00px;height:37.20px;border:1px solid #dedede;border-radius:50%"></div>
<div style="left:311.00px;top:1138.40px;width:36.70px;height:37.20px;border:1px solid #dedede;border-radius:0 5px 5px 0"></div>
<svg style="left:150.3px;top:1138.4px" width="200" height="38" viewBox="0 0 200 38" fill="#bdbdbd"><rect x="12.4" y="12.6" width="2.5" height="12"/><path d="M23.2 12.6V24.6L15 18.6Z"/><path d="M62 12.8V24.6L53.6 18.7Z"/><path d="M134.5 12.8V24.6L143 18.7Z"/><path d="M174 12.6V24.6L182.2 18.6Z"/><rect x="182.3" y="12.6" width="2.5" height="12"/></svg>
<div style="top:1145px;font-size:17.36px;line-height:22px;color:#fff;font-weight:normal;white-space:nowrap;left:230.00px;width:38px;text-align:center;">1</div>
<div style="left:366.40px;top:1138.40px;width:86.30px;height:36.80px;background:#fff;border:1px solid #d6d6d6;border-radius:5px"></div>
<div style="top:1144px;font-size:17.36px;line-height:22px;color:#424242;font-weight:normal;white-space:nowrap;left:377.20px;">50</div>
<svg style="left:429.6px;top:1153px" width="12" height="9" viewBox="0 0 12 9"><path d="M0.3 0.4H11.5L5.9 8Z" fill="#333"/></svg>
<div style="top:1145px;font-size:17.36px;line-height:22px;color:#a8a8a8;font-weight:normal;white-space:nowrap;left:462.40px;">items per page</div>
<div style="left:143.00px;top:93.50px;width:2057.00px;height:1153.30px;background:rgba(0,0,0,.25)"></div>
<div style="left:129.90px;top:262.00px;width:40.60px;height:40.90px;background:#ff6415;border-radius:50%"></div>
<svg style="left:142px;top:273.3px" width="16" height="20" viewBox="0 0 16 20"><path d="M4.6 4L10.6 9.8L4.6 15.6" fill="none" stroke="#000" stroke-width="2.3"/></svg>
<div style="left:1381.00px;top:93.50px;width:9.00px;height:1153.30px;background:linear-gradient(90deg,rgba(0,0,0,0),rgba(0,0,0,.05) 45%,rgba(0,0,0,.2))"></div>
<div style="left:2200.00px;top:93.50px;width:13.00px;height:1153.30px;background:linear-gradient(90deg,rgba(0,0,0,.17),rgba(0,0,0,.05) 50%,rgba(0,0,0,0))"></div>
<div style="left:1383.00px;top:84.50px;width:817.00px;height:9.00px;background:linear-gradient(0deg,rgba(0,0,0,.06),rgba(0,0,0,.02) 50%,rgba(0,0,0,0));-webkit-mask-image:linear-gradient(90deg,transparent,#000 14px);mask-image:linear-gradient(90deg,transparent,#000 14px)"></div>
<div style="left:0;top:0;width:2232px;height:1252px;will-change:transform"><div style="left:1390.00px;top:93.50px;width:810.00px;height:1154.20px;background:#fff;border-bottom:1px solid #e0e0e0;border-top:1px solid #d6d6d6"></div><div style="top:144px;font-size:18.85px;line-height:23px;color:#5b5f64;font-weight:bold;white-space:nowrap;left:1410.40px;">Cost Code:</div><div style="top:145px;font-size:17.56px;line-height:22px;color:#6c6f73;font-weight:normal;white-space:nowrap;left:1548.60px;">02 54 00.0</div><div style="top:144px;font-size:18.85px;line-height:23px;color:#5b5f64;font-weight:bold;white-space:nowrap;left:1787.60px;">UOM:</div><div style="top:145px;font-size:17.56px;line-height:22px;color:#6c6f73;font-weight:normal;white-space:nowrap;left:1875.50px;">ea</div><div style="top:178px;font-size:18.85px;line-height:23px;color:#5b5f64;font-weight:bold;white-space:nowrap;left:1410.40px;">Description:</div><div style="top:179px;font-size:17.56px;line-height:22px;color:#6c6f73;font-weight:normal;white-space:nowrap;left:1543.60px;">Biological Decontamination</div><div style="left:1410.50px;top:248.20px;width:768.60px;height:787.80px;background:#fff;border-radius:5px;box-shadow:0 1.5px 2px rgba(0,0,0,.22)"></div><div style="left:1410.50px;top:248.20px;width:768.60px;height:91.30px;background:#f5f5f5;border-radius:5px 5px 0 0"></div><div style="left:2156.50px;top:339.50px;width:22.60px;height:642.80px;background:#fbfbfb"></div><div style="left:1410.50px;top:466.90px;width:746.00px;height:126.10px;background:#f5f5f5"></div><div style="left:1410.50px;top:982.30px;width:768.60px;height:53.70px;background:#f5f5f5;border-radius:0 0 5px 5px"></div><div style="left:1829.40px;top:339.50px;width:203.00px;height:127.40px;background:#fef7c0"></div><div style="left:1829.40px;top:466.90px;width:203.00px;height:126.10px;background:#fdee6c"></div><div style="top:257px;font-size:17.36px;line-height:22px;color:#424242;font-weight:normal;white-space:nowrap;left:1410.50px;width:108.70000000000005px;text-align:center;">Item</div><div style="top:257px;font-size:17.36px;line-height:22px;color:#424242;font-weight:normal;white-space:nowrap;left:1519.20px;width:108.09999999999991px;text-align:center;">CO</div><div style="top:257px;font-size:17.36px;line-height:22px;color:#424242;font-weight:normal;white-space:nowrap;left:1627.30px;width:202.10000000000014px;text-align:center;letter-spacing:0.09px;">Description</div><div style="top:257px;font-size:17.36px;line-height:22px;color:#424242;font-weight:normal;white-space:nowrap;left:1829.40px;width:203.0px;text-align:center;letter-spacing:0.09px;">Forecast Quantity</div><div class="inp" style="left:1421.90px;top:295.90px;width:41.10px;height:37.20px;"></div><div class="inp" style="left:1530.80px;top:295.90px;width:41.10px;height:37.20px;"></div><div class="inp" style="left:1638.70px;top:295.90px;width:126.40px;height:37.20px;"></div><div style="top:393px;font-size:17.36px;line-height:22px;color:#424242;font-weight:normal;white-space:nowrap;left:1422.40px;">1</div><div style="top:350px;font-size:17.36px;line-height:22px;color:#424242;font-weight:normal;white-space:nowrap;left:1638.80px;letter-spacing:0.09px;">02 54 00.0-LAB-01 -</div><div style="top:379px;font-size:17.36px;line-height:22px;color:#424242;font-weight:normal;white-space:nowrap;left:1638.80px;letter-spacing:0.09px;">Biological</div><div style="top:407px;font-size:17.36px;line-height:22px;color:#424242;font-weight:normal;white-space:nowrap;left:1638.80px;letter-spacing:0.09px;">Decontamination-0-</div><div style="top:435px;font-size:17.36px;line-height:22px;color:#424242;font-weight:normal;white-space:nowrap;left:1638.80px;letter-spacing:0.09px;">Labor</div><div style="top:393px;font-size:17.36px;line-height:22px;color:#424242;font-weight:normal;white-space:nowrap;right:210.70px;text-align:right;">1.00</div><div style="top:519px;font-size:17.36px;line-height:22px;color:#424242;font-weight:normal;white-space:nowrap;left:1422.40px;">2</div><div style="top:477px;font-size:17.36px;line-height:22px;color:#424242;font-weight:normal;white-space:nowrap;left:1638.80px;letter-spacing:0.09px;">02 54 00.0-LEB-01 -</div><div style="top:505px;font-size:17.36px;line-height:22px;color:#424242;font-weight:normal;white-space:nowrap;left:1638.80px;letter-spacing:0.09px;">Biological</div><div style="top:533px;font-size:17.36px;line-height:22px;color:#424242;font-weight:normal;white-space:nowrap;left:1638.80px;letter-spacing:0.09px;">Decontamination-0-</div><div style="top:561px;font-size:17.36px;line-height:22px;color:#424242;font-weight:normal;white-space:nowrap;left:1638.80px;letter-spacing:0.09px;">Labor</div><div style="top:519px;font-size:17.36px;line-height:22px;color:#424242;font-weight:normal;white-space:nowrap;right:210.70px;text-align:right;">1.00</div><div style="left:1518.70px;top:248.20px;width:1.00px;height:344.80px;background:#d3d3d3"></div><div style="left:1518.70px;top:982.30px;width:1.00px;height:53.70px;background:#d3d3d3"></div><div style="left:1626.80px;top:248.20px;width:1.00px;height:344.80px;background:#d3d3d3"></div><div style="left:1626.80px;top:982.30px;width:1.00px;height:53.70px;background:#d3d3d3"></div><div style="left:1828.90px;top:248.20px;width:1.00px;height:344.80px;background:#d3d3d3"></div><div style="left:1828.90px;top:982.30px;width:1.00px;height:53.70px;background:#d3d3d3"></div><div style="left:2031.90px;top:248.20px;width:1.00px;height:344.80px;background:#d3d3d3"></div><div style="left:2031.90px;top:982.30px;width:1.00px;height:53.70px;background:#d3d3d3"></div><div style="left:2156.00px;top:248.20px;width:1.00px;height:91.30px;background:#d3d3d3"></div><div style="left:2156.00px;top:982.30px;width:1.00px;height:53.70px;background:#d3d3d3"></div><div style="left:1410.50px;top:286.00px;width:746.00px;height:1.00px;background:#d3d3d3"></div><div style="left:1410.50px;top:339.00px;width:768.60px;height:1.00px;background:#d3d3d3"></div><div style="left:1410.50px;top:981.80px;width:768.60px;height:1.00px;background:#d3d3d3"></div><div style="left:1410.00px;top:247.70px;width:769.60px;height:788.80px;border:1px solid #d3d3d3;border-radius:5px"></div><svg style="left:2159px;top:345px" width="18" height="14" viewBox="0 0 18 14"><path d="M8.6 2.6L14.8 11H2.4Z" fill="#8f8f8f" stroke="#8f8f8f" stroke-width="1.8" stroke-linejoin="round"/></svg><svg style="left:2159px;top:964.6px" width="18" height="14" viewBox="0 0 18 14"><path d="M8.6 11L14.8 2.6H2.4Z" fill="#8f8f8f" stroke="#8f8f8f" stroke-width="1.8" stroke-linejoin="round"/></svg><div style="top:998px;font-size:17.36px;line-height:22px;color:#2b2b2b;font-weight:bold;white-space:nowrap;right:210.50px;text-align:right;">2.00</div><div style="left:1401.10px;top:1183.00px;width:117.80px;height:47.90px;background:#ff7043;border-radius:4px;box-shadow:0 2px 4px -1px rgba(0,0,0,.2),0 4px 5px rgba(0,0,0,.14),0 1px 10px rgba(0,0,0,.12)"></div><div style="top:1195px;font-size:19.2px;line-height:23px;color:#1c0c06;font-weight:normal;white-space:nowrap;left:1400.60px;width:118px;text-align:center;">CANCEL</div><div style="left:2070.20px;top:1183.00px;width:118.80px;height:47.90px;background:#e0e0e0;border-radius:4px"></div><div style="top:1195px;font-size:19.2px;line-height:23px;color:#8a8a8a;font-weight:normal;white-space:nowrap;left:2070.40px;width:118px;text-align:center;">SAVE</div></div>
</body></html>
